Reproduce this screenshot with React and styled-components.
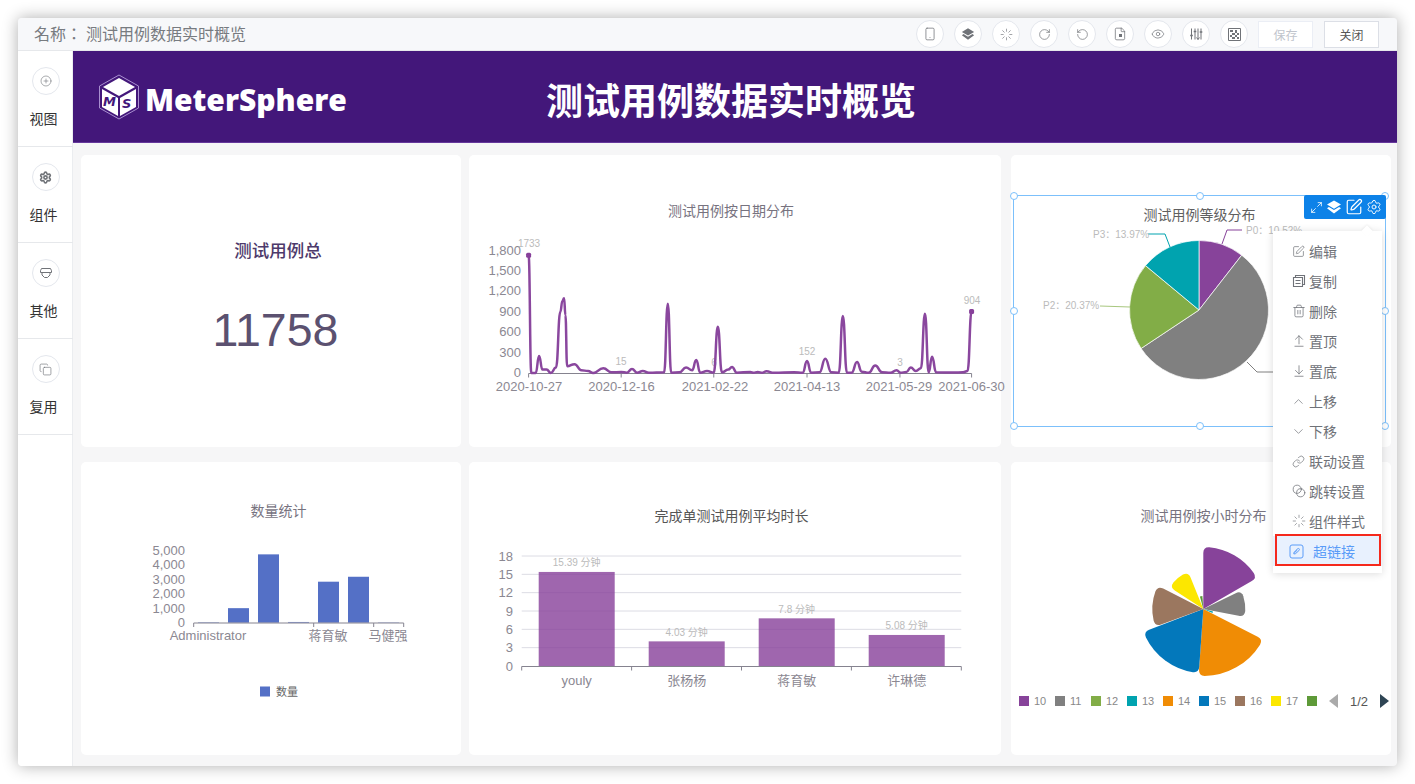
import React from "react";
import styled, { createGlobalStyle } from "styled-components";
import {
  ArrowDownToLine,
  ArrowUpFromLine,
  Blend,
  ChevronDown,
  ChevronUp,
  CirclePlus,
  Copy,
  Eye,
  File,
  Link,
  Loader,
  Maximize2,
  RotateCcw,
  RotateCw,
  Settings,
  Smartphone,
  SquarePen,
  Trash2,
} from "lucide-react";

const FONT = `"Liberation Sans", "Noto Sans CJK SC", sans-serif`;

const GlobalStyle = createGlobalStyle`
  html, body {
    margin: 0;
    background: #fff;
    font-family: ${FONT};
  }
`;

// chart data, x positions are page pixels scaled from the axis
const lineData = [
  [144, 1733], [152, 0], [165, 0], [175, 250], [185, 50], [197, 50], [210, 0], [225, 80], [238, 900], [244, 1060],
  [249, 1100], [253, 850], [258, 100], [280, 130], [300, 40], [320, 30], [335, 0], [365, 70], [390, 10], [418, 15],
  [435, 5], [450, 60], [465, 5], [482, 30], [500, 5], [545, 10], [556, 1020], [566, 5], [590, 10], [610, 80],
  [628, 40], [640, 190], [652, 5], [672, 30], [692, 6], [704, 680], [716, 10], [735, 50], [746, 90], [760, 5],
  [800, 15], [810, 3], [822, 15], [835, 3], [848, 25], [870, 3], [930, 10], [955, 3], [968, 175], [980, 5],
  [1005, 10], [1022, 210], [1040, 10], [1062, 5], [1074, 840], [1086, 5], [1100, 5], [1116, 160], [1130, 20],
  [1150, 3], [1170, 110], [1190, 10], [1215, 3], [1233, 40], [1245, 3], [1262, 15], [1275, 80], [1290, 30],
  [1305, 70], [1317, 870], [1328, 10], [1338, 240], [1350, 10], [1400, 8], [1430, 10], [1443, 30], [1455, 904],
];
const lineX = (v) => 528.6 + (v - 144) * 0.3379;
const lineY = (v) => 373 - (v / 300) * 20.4;

const linePath = lineData.reduce((d, [px, pv], i) => {
  const x = lineX(px);
  const y = lineY(pv);
  if (i === 0) return `M${x} ${y}`;
  const prevX = lineX(lineData[i - 1][0]);
  const prevY = lineY(lineData[i - 1][1]);
  const mid = (x + prevX) / 2;
  return `${d} C${mid} ${prevY} ${mid} ${y} ${x} ${y}`;
}, "");

const polar = (cx, cy, r, deg) => {
  const a = ((deg - 90) * Math.PI) / 180;
  return [cx + r * Math.cos(a), cy + r * Math.sin(a)];
};

// sector with optional rounded outer corners
const sector = (cx, cy, r, from, to, round = 0) => {
  const delta = round ? (round / r) * (180 / Math.PI) : 0;
  const a = polar(cx, cy, r - round, from);
  const b = polar(cx, cy, r, from);
  const c = polar(cx, cy, r, from + delta);
  const d = polar(cx, cy, r, to - delta);
  const e = polar(cx, cy, r, to);
  const f = polar(cx, cy, r - round, to);
  const large = to - from > 180 ? 1 : 0;
  return `M${cx} ${cy} L${a} Q${b} ${c} A${r} ${r} 0 ${large} 1 ${d} Q${e} ${f} Z`;
};

const pieSlices = [
  { from: 0, to: 37.9, color: "#87439a" },
  { from: 37.9, to: 236.4, color: "#808080" },
  { from: 236.4, to: 309.7, color: "#82ad47" },
  { from: 309.7, to: 360, color: "#00a3af" },
];

const roseSlices = [
  { from: 0, to: 60, r: 62, color: "#87439a" },
  { from: 64, to: 101, r: 42, color: "#808080" },
  { from: 105, to: 113, r: 10, color: "#00a3af" },
  { from: 117, to: 184, r: 67, color: "#f08c05" },
  { from: 184, to: 249, r: 64, color: "#0378bb" },
  { from: 250, to: 297, r: 51, color: "#9b775f" },
  { from: 303, to: 338, r: 40, color: "#fce700" },
  { from: 345, to: 356, r: 13, color: "#5e9a38" },
];

const legendItems = [
  ["10", "#87439a"],
  ["11", "#808080"],
  ["12", "#82ad47"],
  ["13", "#00a3af"],
  ["14", "#f08c05"],
  ["15", "#0378bb"],
  ["16", "#9b775f"],
  ["17", "#fce700"],
  ["", "#5e9a38"],
];

const LayersIcon = ({ size = 14 }) => (
  <svg width={size} height={size} viewBox="0 0 16 16" fill="currentColor">
    <path d="M8 1.5 15 5.6 8 9.7 1 5.6Z" />
    <path d="M2.9 8 8 11 13.1 8 15 9.3 8 14.5 1 9.3Z" />
  </svg>
);

const SlidersIcon = () => (
  <svg width="14" height="14" viewBox="0 0 14 14" fill="none" stroke="currentColor" strokeWidth="1">
    <path d="M2.500 1.500v11M6 1.500v11M9 1.500v11M12 1.500v11" />
    <path d="M1.200 8.500h2.600M4.700 4.500h2.600M10.700 5h2.600" strokeWidth="1.600" />
    <path d="M7.500 10.500 9 12.500l1.500-2" />
  </svg>
);

const DenseSquareIcon = () => (
  <svg width="13" height="13" viewBox="0 0 13 13" fill="currentColor">
    <path d="M.500.500h12v12H.500Z" fill="none" stroke="currentColor" />
    <path d="M2 2h3v2H2ZM7 2h2v3H7ZM4 5h3v2H4ZM9 5h2v2H9ZM2 7h2v2H2ZM7 7h2v2H7ZM4 9h3v2H4ZM9 9h2v2H9Z" />
  </svg>
);

const PageFileIcon = () => (
  <IconStack>
    <File size={14} strokeWidth={1.3} />
    <FileDot />
  </IconStack>
);

const OtherIcon = () => (
  <svg width="14" height="14" viewBox="0 0 14 14" fill="none" stroke="currentColor" strokeWidth="1">
    <path d="M2.500 2.500h9l1 2.200v1.800h-11V4.700ZM3 6.500v2.500l2.500 2.500h3L11 9V6.500" />
  </svg>
);

const DocCopyIcon = () => (
  <svg width="14" height="14" viewBox="0 0 14 14" fill="none" stroke="currentColor" strokeWidth="1.100">
    <path d="M1.500 3.500h9v9h-9ZM3.500 3.500v-2h9v9h-2M3.500 6.500h5M3.500 9.500h5" />
  </svg>
);

const HyperlinkIcon = () => (
  <svg width="15" height="15" viewBox="0 0 15 15" fill="none" stroke="currentColor" strokeWidth="1">
    <rect x="1" y="1" width="13" height="13" rx="2" />
    <path d="M5.200 10.400c-1.300-1.200.2-2.700 3-5.300 1.700-1.500 3 .1 1.700 1.500l-3.300 3c-.8.700-1.700-.1-1-1l2.700-2.600" />
  </svg>
);

const thin = { strokeWidth: 1.3 };

const menuItems = [
  { label: "编辑", icon: <SquarePen size={13} {...thin} /> },
  { label: "复制", icon: <DocCopyIcon /> },
  { label: "删除", icon: <Trash2 size={14} {...thin} /> },
  { label: "置顶", icon: <ArrowUpFromLine size={14} {...thin} /> },
  { label: "置底", icon: <ArrowDownToLine size={14} {...thin} /> },
  { label: "上移", icon: <ChevronUp size={19} strokeWidth={1.1} /> },
  { label: "下移", icon: <ChevronDown size={19} strokeWidth={1.1} /> },
  { label: "联动设置", icon: <Link size={13} {...thin} /> },
  { label: "跳转设置", icon: <Blend size={14} {...thin} /> },
  { label: "组件样式", icon: <Loader size={14} strokeWidth={1.1} /> },
  { label: "超链接", icon: <HyperlinkIcon />, active: true },
];

const handles = [
  [0, 0], [50, 0], [100, 0],
  [0, 50], [100, 50],
  [0, 100], [50, 100], [100, 100],
];

const Chart = ({ x, y, w, h, children }) => (
  <ChartSvg viewBox={`${x} ${y} ${w} ${h}`} width={w} height={h}>
    {children}
  </ChartSvg>
);

const LineChart = () => (
  <Chart x={469} y={221} w={532} h={226}>
    {[0, 300, 600, 900, 1200, 1500, 1800].map((v) => (
      <AxisText key={v} x={521} y={lineY(v) + 4} textAnchor="end">
        {v.toLocaleString("en-US")}
      </AxisText>
    ))}
    <AxisLine d="M528.600 373.500H971.600" />
    {[144, 418, 692, 968, 1243, 1455].map((t) => (
      <AxisLine key={t} d={`M${lineX(t)} 373.500v4`} />
    ))}
    {[
      ["2020-10-27", 529],
      ["2020-12-16", 621.5],
      ["2021-02-22", 715],
      ["2021-04-13", 807],
      ["2021-05-29", 899],
      ["2021-06-30", 971.5],
    ].map(([label, x]) => (
      <AxisText key={label} x={x} y={391} textAnchor="middle">
        {label}
      </AxisText>
    ))}
    {[
      ["1733", 529, 247],
      ["15", 621, 365],
      ["6", 714, 366],
      ["152", 807, 355],
      ["3", 900, 366],
      ["904", 972, 304],
    ].map(([label, x, y]) => (
      <MarkText key={label} x={x} y={y} textAnchor="middle">
        {label}
      </MarkText>
    ))}
    <path d={linePath} fill="none" stroke="#8a479e" strokeWidth="2.500" strokeLinejoin="round" />
    <rect x={lineX(144) - 2.5} y={lineY(1733) - 2.5} width="5" height="5" rx="1.500" fill="#87409a" />
    <rect x={lineX(1455) - 2.5} y={lineY(904) - 2.5} width="5" height="5" rx="1.500" fill="#87409a" />
  </Chart>
);

const PieChart = () => (
  <Chart x={1011} y={225} w={380} h={222}>
    {pieSlices.map((s) => (
      <path key={s.color} d={sector(1199, 310, 69.500, s.from, s.to)} fill={s.color} stroke="#fff" strokeWidth="0.700" />
    ))}
    <path d="M1148 234H1165L1170 247" fill="none" stroke="#00a3af" />
    <path d="M1100 306L1130 307" fill="none" stroke="#a8c77e" />
    <path d="M1242 230H1227L1222 244" fill="none" stroke="#87439a" />
    <path d="M1247 362L1257 372H1275" fill="none" stroke="#808080" />
    <MarkText x={1093} y={238}>P3：13.97%</MarkText>
    <MarkText x={1043} y={309}>P2：20.37%</MarkText>
    <MarkText x={1246} y={234}>P0：10.52%</MarkText>
  </Chart>
);

const CountChart = () => {
  const top = (v) => 622.7 - (v / 5000) * 72.7;
  return (
    <Chart x={81} y={521} w={380} h={234}>
      {[0, 1000, 2000, 3000, 4000, 5000].map((v) => (
        <AxisText key={v} x={185} y={top(v) + 4.500} textAnchor="end">
          {v.toLocaleString("en-US")}
        </AxisText>
      ))}
      {[30, 1000, 4700, 50, 2820, 3160, 20].map((v, i) => (
        <rect key={i} x={198 + i * 30} y={top(v)} width="21" height={622.7 - top(v)} fill="#5470c6" />
      ))}
      <AxisLine d="M193.700 623H403.700" />
      {[193.7, 313.7, 373.7, 403.7].map((x) => (
        <AxisLine key={x} d={`M${x} 623v4`} />
      ))}
      <AxisText x={208} y={640} textAnchor="middle">Administrator</AxisText>
      <AxisText x={328} y={640} textAnchor="middle">蒋育敏</AxisText>
      <AxisText x={388} y={640} textAnchor="middle">马健强</AxisText>
      <rect x="260" y="686.500" width="10" height="10" fill="#5470c6" />
      <LegendText x={276} y={695.500}>数量</LegendText>
    </Chart>
  );
};

const AvgChart = () => {
  const y = (v) => 666 - (v / 18) * 110;
  const bars = [
    ["youly", 15.39],
    ["张杨杨", 4.03],
    ["蒋育敏", 7.8],
    ["许琳德", 5.08],
  ];
  return (
    <Chart x={469} y={526} w={532} h={229}>
      {[0, 3, 6, 9, 12, 15, 18].map((v) => (
        <g key={v}>
          {v > 0 && <path d={`M521.700 ${y(v)}H961.300`} stroke="#dcdce4" fill="none" />}
          <AxisText x={513} y={y(v) + 4.500} textAnchor="end">{v}</AxisText>
        </g>
      ))}
      {bars.map(([name, v], i) => {
        const center = 576.7 + i * 110;
        return (
          <g key={name}>
            <rect x={center - 38} y={y(v)} width="76" height={666 - y(v)} fill="#87409a" fillOpacity="0.8" />
            <MarkText x={center} y={y(v) - 5.500} textAnchor="middle">{`${v} 分钟`}</MarkText>
            <AxisText x={center} y={684.500} textAnchor="middle">{name}</AxisText>
          </g>
        );
      })}
      <AxisLine d="M521.700 666.500H961.300" />
      {[521.7, 631.6, 741.5, 851.4, 961.3].map((x) => (
        <AxisLine key={x} d={`M${x} 666.500v4`} />
      ))}
    </Chart>
  );
};

const RoseChart = () => (
  <Chart x={1011} y={526} w={380} h={168}>
    {roseSlices.map((s) => (
      <path
        key={s.color}
        d={sector(1203.3, 609, s.r, s.from, s.to, s.r > 20 ? 6 : 0)}
        fill={s.color}
      />
    ))}
  </Chart>
);

const App = () => (
  <>
    <GlobalStyle />
    <Page>
      <Window>
        <TopBar>
          <PageName>
            <NameLabel>名称：</NameLabel>测试用例数据实时概览
          </PageName>
          <ToolGroup>
            <RoundButton><Smartphone size={14} {...thin} /></RoundButton>
            <RoundButton><LayersIcon /></RoundButton>
            <RoundButton><Loader size={13} strokeWidth={1.2} /></RoundButton>
            <RoundButton><RotateCw size={13} {...thin} /></RoundButton>
            <RoundButton><RotateCcw size={13} {...thin} /></RoundButton>
            <RoundButton><PageFileIcon /></RoundButton>
            <RoundButton><Eye size={14} strokeWidth={1.2} /></RoundButton>
            <RoundButton><SlidersIcon /></RoundButton>
            <RoundButton><DenseSquareIcon /></RoundButton>
          </ToolGroup>
          <TextButton disabled>保存</TextButton>
          <TextButton>关闭</TextButton>
        </TopBar>
        <Body>
          <Sidebar>
            <SideItem><RoundButton><CirclePlus size={12} strokeWidth={1.2} /></RoundButton><SideLabel>视图</SideLabel></SideItem>
            <SideItem><RoundButton><Settings size={13} strokeWidth={3} /></RoundButton><SideLabel>组件</SideLabel></SideItem>
            <SideItem><RoundButton><OtherIcon /></RoundButton><SideLabel>其他</SideLabel></SideItem>
            <SideItem><RoundButton><Copy size={13} strokeWidth={1.2} /></RoundButton><SideLabel>复用</SideLabel></SideItem>
          </Sidebar>
          <Main>
            <Banner>
              <Brand>
                <LogoMark width="42" height="46" viewBox="0 0 42 46">
                  <path d="M21 1 40.500 12V34L21 45 1.500 34V12Z" fill="none" stroke="#a98fd0" strokeWidth="1" />
                  <path d="M21 4 37 13 21 22 5 13Z" fill="#fff" />
                  <path d="M4 15 20 24V42L4 33Z" fill="#fff" />
                  <path d="M38 15 22 24V42L38 33Z" fill="#fff" />
                  <CubeLetter x="5" y="32">M</CubeLetter>
                  <CubeLetter x="24" y="34">S</CubeLetter>
                </LogoMark>
                <LogoText>MeterSphere</LogoText>
              </Brand>
              <BannerTitle>测试用例数据实时概览</BannerTitle>
            </Banner>
            <Board>
              <Card>
                <TotalTitle>测试用例总</TotalTitle>
                <TotalValue>11758</TotalValue>
              </Card>
              <Card>
                <ChartTitle $top={46} $shift={-4} $color="#77737f">测试用例按日期分布</ChartTitle>
                <LineChart />
              </Card>
              <Card $raised>
                <ChartTitle $top={50} $shift={-1.5} $color="#5f5f5f">测试用例等级分布</ChartTitle>
                <PieChart />
                <Selection>
                  {handles.map(([x, y]) => (
                    <Handle key={`${x}-${y}`} $x={x} $y={y} />
                  ))}
                  <SelectionTools>
                    <Maximize2 size={13} strokeWidth={1.5} />
                    <LayersIcon size={16} />
                    <SquarePen size={18} strokeWidth={1.6} />
                    <Settings size={16} strokeWidth={1.4} />
                  </SelectionTools>
                </Selection>
                <Menu>
                  {menuItems.map((item) => (
                    <MenuItem key={item.label} $active={item.active}>
                      <MenuIcon>{item.icon}</MenuIcon>
                      {item.label}
                    </MenuItem>
                  ))}
                </Menu>
              </Card>
              <Card>
                <ChartTitle $top={39} $shift={7.5} $color="#77737f">数量统计</ChartTitle>
                <CountChart />
              </Card>
              <Card>
                <ChartTitle $top={44} $shift={-3.5} $color="#555">完成单测试用例平均时长</ChartTitle>
                <AvgChart />
              </Card>
              <Card>
                <ChartTitle $top={44} $shift={2.5} $color="#77737f">测试用例按小时分布</ChartTitle>
                <RoseChart />
                <Legend>
                  {legendItems.map(([label, color]) => (
                    <LegendItem key={color} $short={!label}>
                      <Swatch $color={color} />
                      {label}
                    </LegendItem>
                  ))}
                  <Pager>
                    <PagerArrow $dir="left" />
                    1/2
                    <PagerArrow $dir="right" />
                  </Pager>
                </Legend>
              </Card>
            </Board>
          </Main>
        </Body>
      </Window>
    </Page>
  </>
);

const Page = styled.div`
  box-sizing: border-box;
  height: 784px;
  padding: 18px;
  background: #fff;
  overflow: hidden;
`;
const Window = styled.div`
  width: 1379px;
  height: 748px;
  display: flex;
  flex-direction: column;
  border-radius: 4px;
  overflow: hidden;
  background: #f6f6f7;
  box-shadow: 0 0 16px rgba(0, 0, 0, 0.32);
`;
const TopBar = styled.div`
  box-sizing: border-box;
  height: 33px;
  flex: none;
  display: flex;
  align-items: center;
  padding: 0 18px 0 16px;
  background: #f7f8fa;
  border-bottom: 1px solid #e6e8eb;
`;
const PageName = styled.div`
  flex: 1;
  margin-top: -3px;
  font-size: 16px;
  color: #777b80;
`;
const NameLabel = styled.span`
  display: inline-block;
  width: 52px;
  font-family: "Noto Sans CJK TC", sans-serif;
`;
const ToolGroup = styled.div`
  display: flex;
  gap: 10px;
  margin-right: 10px;
`;
const RoundButton = styled.div`
  box-sizing: border-box;
  width: 28px;
  height: 28px;
  display: flex;
  align-items: center;
  justify-content: center;
  border: 1px solid #e4e7ed;
  border-radius: 50%;
  background: #fff;
  color: #707378;
`;
const IconStack = styled.div`
  position: relative;
  display: flex;
`;
const FileDot = styled.span`
  position: absolute;
  left: 6px;
  top: 7px;
  width: 3px;
  height: 3px;
  background: #707378;
`;
const TextButton = styled.button`
  box-sizing: border-box;
  width: 55px;
  height: 27px;
  margin-left: ${(p) => (p.disabled ? "0" : "11px")};
  padding: 0;
  border: 1px solid ${(p) => (p.disabled ? "#ebeef5" : "#dcdfe6")};
  background: #fff;
  color: ${(p) => (p.disabled ? "#c0c4cc" : "#555")};
  font-family: ${FONT};
  font-size: 12px;
`;
const Body = styled.div`
  flex: 1;
  display: flex;
  min-height: 0;
`;
const Sidebar = styled.div`
  width: 55px;
  flex: none;
  background: #fff;
  box-shadow: inset -1px 0 0 #ebedf0;
`;
const SideItem = styled.div`
  box-sizing: border-box;
  height: 96px;
  display: flex;
  flex-direction: column;
  align-items: center;
  padding-top: 16px;
  border-bottom: 1px solid #e6e8eb;
`;
const SideLabel = styled.div`
  margin: 14px 4px 0 0;
  font-size: 14px;
  line-height: 20px;
  color: #333;
`;
const Main = styled.div`
  flex: 1;
  display: flex;
  flex-direction: column;
  min-width: 0;
`;
const Banner = styled.div`
  box-sizing: border-box;
  height: 92px;
  flex: none;
  display: flex;
  align-items: center;
  padding: 5px 0 0 25px;
  background: #43177a;
  border-bottom: 1px solid #66389c;
`;
const Brand = styled.div`
  width: 448px;
  flex: none;
  display: flex;
  align-items: center;
`;
const LogoMark = styled.svg`
  flex: none;
  margin-top: -5px;
`;
const LogoText = styled.div`
  margin-left: 5px;
  font-family: "Open Sans", sans-serif;
  font-weight: 800;
  font-size: 30px;
  color: #fff;
`;
const BannerTitle = styled.div`
  font-family: "Noto Sans CJK SC", sans-serif;
  font-weight: 700;
  font-size: 37px;
  color: #fff;
`;
const CubeLetter = styled.text`
  font-family: "DejaVu Sans", sans-serif;
  font-weight: 700;
  font-style: italic;
  font-size: 13px;
  fill: #43177a;
`;
const Board = styled.div`
  flex: 1;
  display: grid;
  grid-template-columns: 380px 532px 382px;
  grid-template-rows: 292px 293px;
  column-gap: 8px;
  row-gap: 15px;
  padding: 12px 0 0 8px;
`;
const Card = styled.div`
  position: relative;
  z-index: ${(p) => (p.$raised ? 2 : 0)};
  display: flex;
  flex-direction: column;
  background: #fff;
  border-radius: 5px;
  &:nth-child(3n) {
    margin-left: 2px;
  }
`;
const TotalTitle = styled.div`
  margin-top: 86px;
  padding-left: 14px;
  text-align: center;
  font-size: 17.500px;
  line-height: 20px;
  font-weight: 500;
  color: #4d3a6b;
`;
const TotalValue = styled.div`
  margin-top: 30px;
  padding-left: 9px;
  text-align: center;
  font-size: 46.500px;
  line-height: 78px;
  color: #5b5170;
`;
const ChartTitle = styled.div`
  flex: none;
  margin-top: ${(p) => p.$top}px;
  transform: translateX(${(p) => p.$shift}px);
  text-align: center;
  font-size: 14px;
  line-height: 20px;
  color: ${(p) => p.$color};
`;
const ChartSvg = styled.svg`
  display: block;
  flex: none;
  overflow: visible;
`;
const AxisText = styled.text`
  font-family: ${FONT};
  font-size: 13px;
  fill: #8b8892;
`;
const MarkText = styled.text`
  font-family: ${FONT};
  font-size: 10px;
  fill: #bbb;
`;
const LegendText = styled.text`
  font-family: ${FONT};
  font-size: 11px;
  fill: #666;
`;
const AxisLine = styled.path`
  fill: none;
  stroke: #85838f;
`;
const Legend = styled.div`
  display: flex;
  align-items: center;
  height: 14px;
  padding-left: 8px;
`;
const LegendItem = styled.div`
  box-sizing: border-box;
  width: ${(p) => (p.$short ? "22px" : "36px")};
  flex: none;
  display: flex;
  align-items: center;
  gap: 5px;
  font-size: 11px;
  color: #888;
`;
const Swatch = styled.span`
  width: 10px;
  height: 10px;
  flex: none;
  background: ${(p) => p.$color};
`;
const Pager = styled.div`
  display: flex;
  align-items: center;
  gap: 12px;
  font-size: 13px;
  color: #555;
`;
const PagerArrow = styled.span`
  width: 0;
  height: 0;
  border-top: 7px solid transparent;
  border-bottom: 7px solid transparent;
  border-left: ${(p) => (p.$dir === "right" ? "9px solid #2f4554" : "0")};
  border-right: ${(p) => (p.$dir === "left" ? "9px solid #aaa" : "0")};
`;
const Selection = styled.div`
  position: absolute;
  left: 2px;
  top: 40px;
  box-sizing: border-box;
  width: 373px;
  height: 232px;
  border: 1px solid #7cc0fb;
`;
const Handle = styled.span`
  position: absolute;
  left: ${(p) => p.$x}%;
  top: ${(p) => p.$y}%;
  box-sizing: border-box;
  width: 8px;
  height: 8px;
  margin: -4px 0 0 -4px;
  border: 1px solid #7cc0fb;
  border-radius: 50%;
  background: #fff;
`;
const SelectionTools = styled.div`
  position: absolute;
  right: -1px;
  top: -1px;
  box-sizing: border-box;
  width: 82px;
  height: 24px;
  display: flex;
  align-items: center;
  gap: 3px;
  padding-left: 6px;
  border-radius: 2px;
  background: #0d82e8;
  color: #fff;
`;
const Menu = styled.div`
  position: absolute;
  left: 262px;
  top: 76px;
  box-sizing: border-box;
  width: 109px;
  padding: 5px 0 7px;
  background: #fff;
  box-shadow: 0 1px 8px rgba(0, 0, 0, 0.14);
  &::before {
    content: "";
    position: absolute;
    top: -4px;
    right: 11px;
    width: 8px;
    height: 8px;
    background: #fff;
    transform: rotate(45deg);
    box-shadow: -1px -1px 2px rgba(0, 0, 0, 0.05);
  }
`;
const MenuIcon = styled.span`
  width: 15px;
  height: 15px;
  display: flex;
  align-items: center;
  justify-content: center;
`;
const MenuItem = styled.div`
  position: relative;
  height: 30px;
  display: flex;
  align-items: center;
  gap: ${(p) => (p.$active ? "9px" : "3px")};
  padding-left: ${(p) => (p.$active ? "16px" : "18px")};
  font-size: 14px;
  color: ${(p) => (p.$active ? "#5a9cf8" : "#6f7278")};
  background: ${(p) => (p.$active ? "#e8f1fe" : "transparent")};
  ${(p) =>
    p.$active &&
    `&::after {
      content: "";
      position: absolute;
      left: 2px;
      right: 1px;
      top: -2px;
      bottom: 0;
      border: 2px solid #f5291c;
    }`}
`;

export default App;
